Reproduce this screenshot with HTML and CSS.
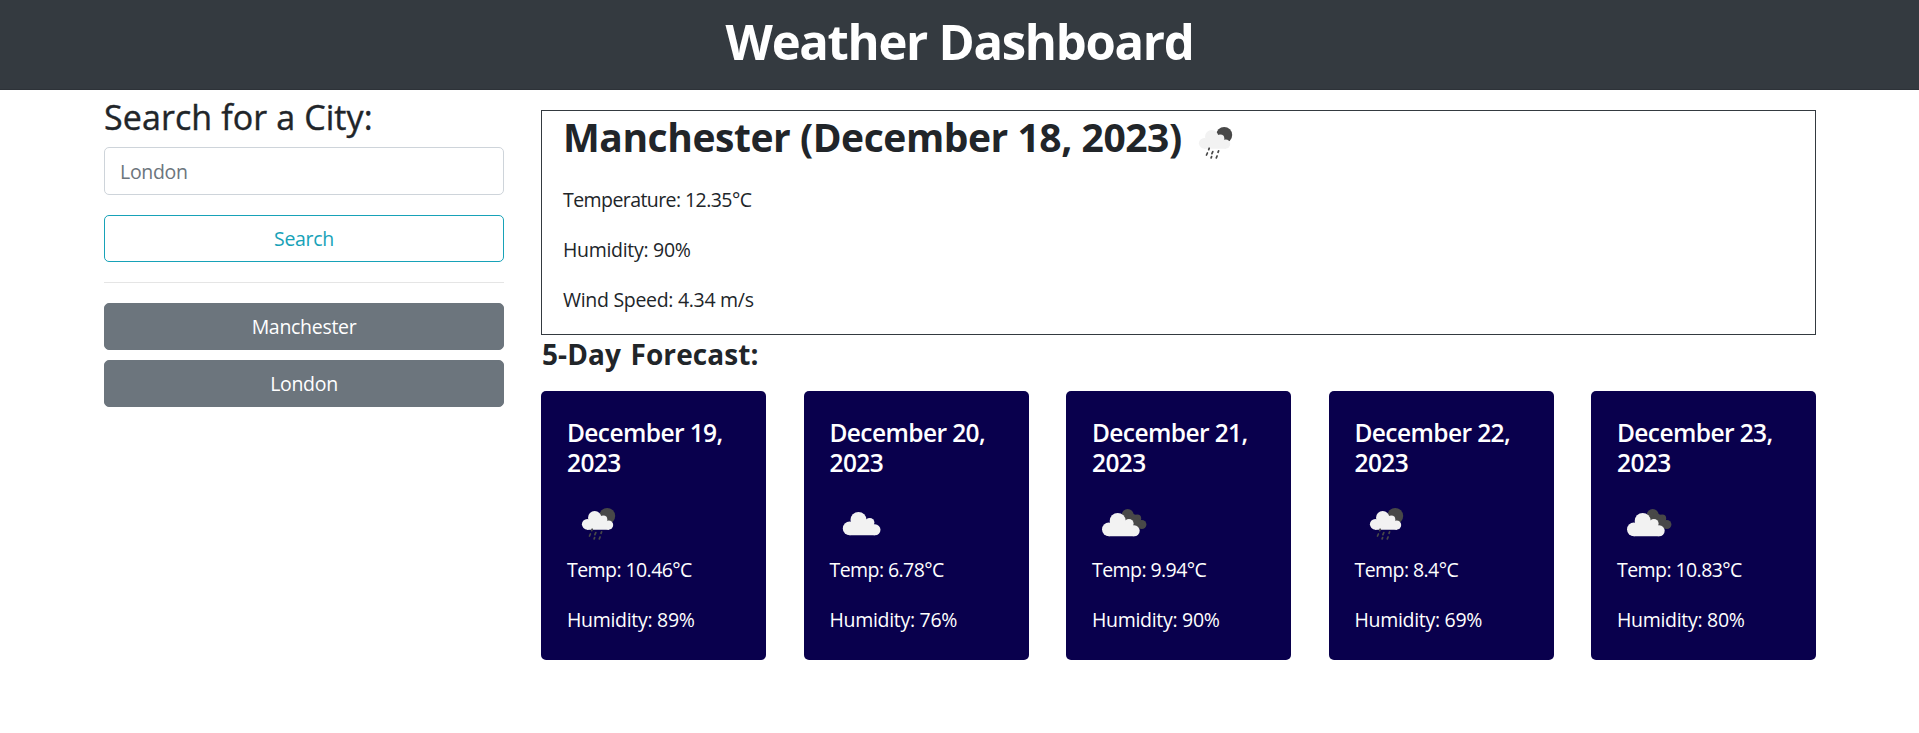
FILE: index.html
```html
<!DOCTYPE html>
<html lang="en">
<head>
<meta charset="utf-8">
<title>Weather Dashboard</title>
<link rel="stylesheet" href="styles.css">
</head>
<body>
<svg class="defs" width="0" height="0" aria-hidden="true">
  <symbol id="rain" viewBox="0 0 62 62">
    <circle cx="40.2" cy="24" r="8" fill="#484848"/>
    <g fill="#f2f2f2"><circle cx="20.3" cy="32.3" r="5.4"/><circle cx="27.7" cy="25.8" r="6.7"/><circle cx="36.3" cy="27.4" r="4"/><circle cx="41.6" cy="33.1" r="4.6"/><path d="M20 28h17l5 5v4.7H20z"/></g>
    <path d="M25.2 37.2l-.5 1.4M23.4 42l-.9 2M28.8 40.6l-.9 2M34.6 39.9l-.6 1.4M27.6 45.6l-.5 1.3M33.1 45l-.8 1.9" stroke="#484848" stroke-width="1.7" stroke-linecap="round"/>
  </symbol>
  <symbol id="cloud" viewBox="0 0 62 62">
    <g fill="#f2f2f2"><circle cx="19.7" cy="36.4" r="6.9"/><circle cx="28.5" cy="28" r="8"/><circle cx="39.7" cy="30.6" r="4.7"/><circle cx="45" cy="37.8" r="5.5"/><path d="M20 30h20l5 3v10.3H19.7z"/></g>
  </symbol>
  <symbol id="clouds" viewBox="0 0 62 62">
    <g fill="#484848"><circle cx="35.7" cy="23" r="6"/><circle cx="45.2" cy="26.6" r="4"/><circle cx="49.8" cy="32.5" r="4.6"/><path d="M37 20l8 3.5 5 9-3 4.2-12-7z"/></g>
    <use href="#cloud" x="-2.8" y="1" width="62" height="62"/>
  </symbol>
</svg>
<header class="header"><h1 class="header-title">Weather Dashboard</h1></header>
<div class="layout">
  <aside class="sidebar">
    <h2 class="search-title">Search for a City:</h2>
    <input class="search-input" type="text" placeholder="London">
    <button class="btn btn-search">Search</button>
    <hr class="divider">
    <div class="history">
      <button class="btn">Manchester</button>
      <button class="btn">London</button>
    </div>
  </aside>
  <main class="content">
    <section class="today">
      <h2 class="today-title">Manchester (December 18, 2023)<svg class="icon"><use href="#rain"/></svg></h2>
      <p class="temp">Temperature: 12.35°C</p>
      <p>Humidity: 90%</p>
      <p>Wind Speed: 4.34 m/s</p>
    </section>
    <h3 class="forecast-title">5-Day Forecast:</h3>
    <section class="forecast">
      <article class="card"><h4>December 19, 2023</h4><svg class="icon"><use href="#rain"/></svg><p class="temp">Temp: 10.46°C</p><p>Humidity: 89%</p></article>
      <article class="card"><h4>December 20, 2023</h4><svg class="icon"><use href="#cloud"/></svg><p class="temp">Temp: 6.78°C</p><p>Humidity: 76%</p></article>
      <article class="card"><h4>December 21, 2023</h4><svg class="icon"><use href="#clouds"/></svg><p class="temp">Temp: 9.94°C</p><p>Humidity: 90%</p></article>
      <article class="card"><h4>December 22, 2023</h4><svg class="icon"><use href="#rain"/></svg><p class="temp">Temp: 8.4°C</p><p>Humidity: 69%</p></article>
      <article class="card"><h4>December 23, 2023</h4><svg class="icon"><use href="#clouds"/></svg><p class="temp">Temp: 10.83°C</p><p>Humidity: 80%</p></article>
    </section>
  </main>
</div>
</body>
</html>
```
FILE: styles.css
```css
* { box-sizing: border-box; }
body {
  margin: 0;
  background: #fff;
  color: #212529;
  font-family: "Open Sans", "Noto Sans", sans-serif;
  font-size: 19.5px;
  line-height: 30px;
  letter-spacing: -0.3px;
}
h1, h2, h3, h4, p { margin: 0; }
.defs { display: block; height: 0; }
.header {
  height: 90px;
  padding-top: 11px;
  background: #343a40;
  border-bottom: 1px solid #2d3238;
  color: #fff;
  text-align: center;
}
.header-title { font-size: 49px; line-height: 60px; font-weight: 700; letter-spacing: -1.3px; }
.layout { display: flex; gap: 37px; padding: 0 103px 0 104px; }
.sidebar { width: 400px; padding-top: 6px; }
.search-title { font-size: 34px; line-height: 42px; font-weight: 500; letter-spacing: 0.1px; -webkit-text-stroke: 0.4px #212529; }
.search-input {
  display: block;
  width: 100%;
  height: 48px;
  margin-top: 9px;
  padding: 1px 15px 0;
  border: 1px solid #ced4da;
  border-radius: 5px;
  background: #fff;
  font: inherit;
  letter-spacing: inherit;
}
.search-input::placeholder { color: #6c757d; opacity: 1; }
.btn {
  display: block;
  width: 100%;
  height: 47px;
  padding: 0;
  border: 1px solid #6c757d;
  border-radius: 5px;
  background: #6c757d;
  color: #fff;
  font: inherit;
  letter-spacing: inherit;
}
.btn-search { margin-top: 20px; background: #fff; border-color: #17a2b8; color: #17a2b8; }
.divider { margin: 20px 0; border: 0; border-top: 1px solid #e5e5e5; }
.history { display: flex; flex-direction: column; gap: 10px; }
.content { flex: 1; padding-top: 20px; }
.today { height: 225px; padding: 0 21px; border: 1px solid #343a40; }
.today p { margin-bottom: 20px; }
.today-title { display: flex; height: 74px; font-size: 39px; line-height: 51px; font-weight: 700; letter-spacing: -0.45px; }
.today-title .icon { margin-left: 2px; }
.icon { display: block; width: 62px; height: 62px; }
.temp { letter-spacing: -0.57px; }
.forecast-title { font-size: 28px; line-height: 38px; font-weight: 700; margin-bottom: 18px; letter-spacing: 0.1px; padding-left: 1px; word-spacing: 2px; }
.forecast { display: flex; justify-content: space-between; }
.card { width: 225px; height: 269px; padding: 27px 26px 25px; border-radius: 5px; background: #09004d; color: #fff; }
.card h4 { font-size: 24.5px; line-height: 30px; font-weight: 600; letter-spacing: -0.6px; }
.card .icon { margin-top: 14px; margin-bottom: 1px; }
.card p + p { margin-top: 20px; }
```
